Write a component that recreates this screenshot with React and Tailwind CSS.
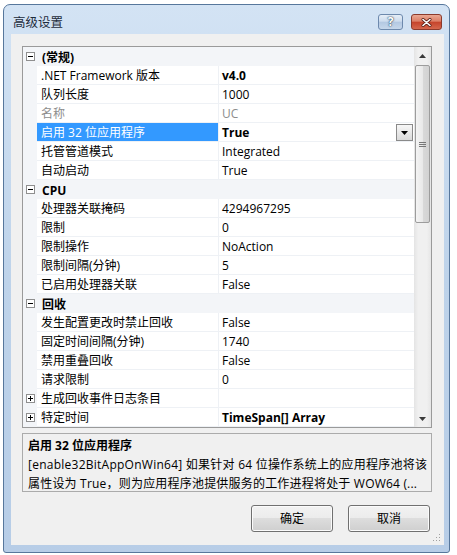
import React from 'react';

const rows = [
  { cat: '(常规)' },
  { label: '.NET Framework 版本', value: 'v4.0', bold: true },
  { label: '队列长度', value: '1000' },
  { label: '名称', value: 'UC', disabled: true },
  { label: '启用 32 位应用程序', value: 'True', bold: true, selected: true },
  { label: '托管管道模式', value: 'Integrated' },
  { label: '自动启动', value: 'True' },
  { cat: 'CPU' },
  { label: '处理器关联掩码', value: '4294967295' },
  { label: '限制', value: '0' },
  { label: '限制操作', value: 'NoAction' },
  { label: '限制间隔(分钟)', value: '5' },
  { label: '已启用处理器关联', value: 'False' },
  { cat: '回收' },
  { label: '发生配置更改时禁止回收', value: 'False' },
  { label: '固定时间间隔(分钟)', value: '1740' },
  { label: '禁用重叠回收', value: 'False' },
  { label: '请求限制', value: '0' },
  { label: '生成回收事件日志条目', value: '', expand: true },
  { label: '特定时间', value: 'TimeSpan[] Array', bold: true, expand: true },
];

function ExpandBox({ open }) {
  return (
    <svg width="9" height="9" viewBox="0 0 9 9" className="block">
      <rect x="0.5" y="0.5" width="8" height="8" fill="#fff" stroke="#8f8f8f" />
      <path d="M2 4.5h5" stroke="#000" />
      {!open && <path d="M4.5 2v5" stroke="#000" />}
    </svg>
  );
}

function Row({ r }) {
  if (r.cat) {
    return (
      <div className="flex h-[19px] items-center bg-[#f3f5f8]">
        <div className="w-[14px] shrink-0 pl-[3px]">
          <ExpandBox open />
        </div>
        <span className="pl-[5px] pt-[2px] font-bold leading-[17px]">{r.cat}</span>
      </div>
    );
  }
  return (
    <div className="flex h-[19px]">
      <div className="w-[14px] shrink-0 bg-[#f3f5f8] pl-[3px] flex items-center">
        {r.expand && <ExpandBox />}
      </div>
      <div
        className={`w-[182px] shrink-0 border-b border-r border-[#eef1f5] pl-[4px] pt-[1px] flex items-center whitespace-nowrap overflow-hidden ${
          r.selected ? 'bg-[#3399ff] text-white' : r.disabled ? 'text-[#8d8d8d]' : ''
        }`}
      >
        {r.label}
      </div>
      <div
        className={`flex-1 border-b border-[#eef1f5] pl-[3px] pt-[1px] flex items-center whitespace-nowrap ${
          r.bold ? 'font-bold' : ''
        } ${r.disabled ? 'text-[#8d8d8d]' : ''}`}
      >
        {r.value}
        {r.selected && (
          <div className="ml-auto mr-[1px] w-[17px] h-[17px] border border-[#8a8a8a] bg-linear-to-b from-[#f7f7f7] to-[#dadada] flex items-center justify-center">
            <svg width="7" height="4" viewBox="0 0 7 4">
              <path d="M0 0h7L3.5 4z" fill="#000" />
            </svg>
          </div>
        )}
      </div>
    </div>
  );
}

function Scrollbar() {
  return (
    <div className="w-[17px] shrink-0 flex flex-col bg-[linear-gradient(to_right,#e4e4e4,#f0f0f0_25%,#f0f0f0_75%,#e6e6e6)]">
      <div className="h-[17px] flex items-center justify-center">
        <svg width="7" height="4" viewBox="0 0 7 4">
          <path d="M3.5 0L7 4H0z" fill="#3a3a3a" />
        </svg>
      </div>
      <div className="mt-[1px] mx-[1px] h-[158px] rounded-[2px] border border-[#9c9c9c] bg-[linear-gradient(to_right,#f4f4f4,#e9e9e9_50%,#d9d9d9_50%,#d2d2d2)] flex items-center justify-center">
        <svg width="7" height="7" viewBox="0 0 7 7">
          <path d="M0 1.5h7M0 3.5h7M0 5.5h7" stroke="#777" />
        </svg>
      </div>
      <div className="flex-1" />
      <div className="h-[17px] flex items-center justify-center">
        <svg width="7" height="4" viewBox="0 0 7 4">
          <path d="M0 0h7L3.5 4z" fill="#3a3a3a" />
        </svg>
      </div>
    </div>
  );
}

function Button({ children }) {
  return (
    <div className="w-[82px] h-[27px] rounded-[3px] border border-[#707070] bg-[linear-gradient(#f2f2f2,#ebebeb_50%,#dddddd_50%,#cfcfcf)] shadow-[inset_0_0_0_1px_#fbfbfb] flex items-center justify-center pt-[1px]">
      {children}
    </div>
  );
}

export default function App() {
  return (
    <div className="w-[457px] h-[555px] bg-white overflow-hidden pt-[4px] pl-[3px] font-['Open_Sans','Noto_Sans_CJK_SC',sans-serif] text-[12px] text-black">
      <div className="w-[447px] h-[549px] rounded-t-[7px] rounded-b-[3px] border border-[#57779c] bg-linear-to-b from-[#d3e3f4] via-[#bed3ea] to-[#b7cde7] flex flex-col">
        <div className="h-[29px] shrink-0 flex items-start pl-[9px] pr-[7px]">
          <span className="mt-[9px] leading-[18px] text-[12.5px] text-[#1e2c3c]">高级设置</span>
          <div className="ml-auto mt-[9px] flex gap-[8px]">
            <div className="w-[25px] h-[16px] rounded-[3px] border border-[#6d89ad] bg-[linear-gradient(#e6eef7,#cddcee_45%,#b3c8e2_50%,#c6d7eb)] flex items-center justify-center">
              <span className="text-[12px] font-bold leading-none text-white [text-shadow:0_0_2px_#1d3550,0_0_1px_#1d3550]">?</span>
            </div>
            <div className="w-[31px] h-[16px] rounded-[3px] border border-[#8b3a2c] bg-[linear-gradient(#eaa893,#dc7e66_45%,#c5432b_50%,#d5674d)] flex items-center justify-center">
              <svg width="11" height="9" viewBox="0 0 11 9">
                <path d="M2 1.5l7 6M9 1.5l-7 6" stroke="#5a1f16" strokeWidth="3" strokeLinecap="round" />
                <path d="M2 1.5l7 6M9 1.5l-7 6" stroke="#fff" strokeWidth="1.6" strokeLinecap="round" />
              </svg>
            </div>
          </div>
        </div>

        <div className="relative ml-[7px] w-[433px] h-[511px] shrink-0 bg-[#f0f0f0] flex flex-col pt-[12px] pl-[11px]">
          <div className="w-[410px] h-[382px] shrink-0 border border-[#9a9a9a] bg-white flex">
            <div className="w-[391px] shrink-0 flex flex-col">
              {rows.map((r, i) => (
                <Row key={i} r={r} />
              ))}
            </div>
            <Scrollbar />
          </div>

          <div className="mt-[5px] w-[410px] h-[59px] shrink-0 border border-[#ababab] pl-[5px] pt-[2px] leading-[19px] whitespace-nowrap overflow-hidden">
            <div className="font-bold">启用 32 位应用程序</div>
            <div className="tracking-[0.25px]">[enable32BitAppOnWin64] 如果针对 64 位操作系统上的应用程序池将该</div>
            <div className="tracking-[0.2px]">属性设为 True，则为应用程序池提供服务的工作进程将处于 WOW64 (...</div>
          </div>

          <div className="mt-[13px] flex justify-end gap-[15px] pr-[14px]">
            <Button>确定</Button>
            <Button>取消</Button>
          </div>

          <svg width="9" height="9" viewBox="0 0 9 9" className="absolute right-[3px] bottom-[3px]">
            <path d="M7 1h1v1H7zM7 4h1v1H7zM4 4h1v1H4zM7 7h1v1H7zM4 7h1v1H4zM1 7h1v1H1z" fill="#a0a0a0" />
          </svg>
        </div>
      </div>
    </div>
  );
}
